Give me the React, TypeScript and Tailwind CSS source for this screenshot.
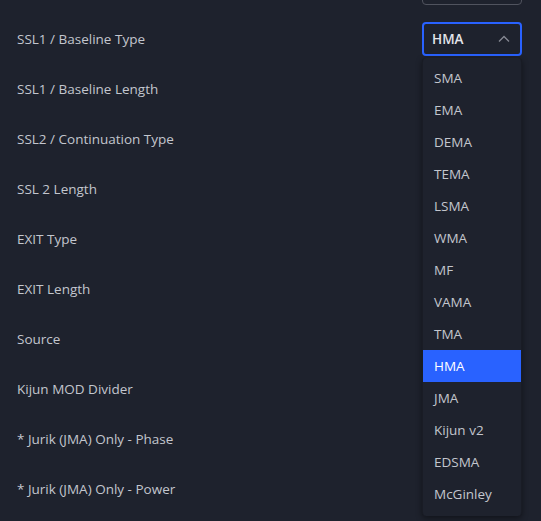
import React from 'react';

const rows = [
  'SSL1 / Baseline Type',
  'SSL1 / Baseline Length',
  'SSL2 / Continuation Type',
  'SSL 2 Length',
  'EXIT Type',
  'EXIT Length',
  'Source',
  'Kijun MOD Divider',
  '* Jurik (JMA) Only - Phase',
  '* Jurik (JMA) Only - Power',
];

const options = [
  'SMA', 'EMA', 'DEMA', 'TEMA', 'LSMA', 'WMA', 'MF', 'VAMA', 'TMA', 'HMA', 'JMA', 'Kijun v2', 'EDSMA', 'McGinley',
];

function ChevronUp() {
  return (
    <svg width="12" height="8" viewBox="0 0 12 8" fill="none">
      <path d="M1 6.5 6 1.5l5 5" stroke="#868993" strokeWidth="1.3" />
    </svg>
  );
}

export default function App() {
  return (
    <div
      className="relative w-[541px] h-[521px] overflow-hidden bg-[#1e222d] text-[13.5px] text-[#c3c6ce]"
      style={{ fontFamily: '"Open Sans", "DejaVu Sans", sans-serif' }}
    >
      <div className="flex justify-end pr-[19px] -mt-[29px] mb-[9px]">
        <div className="w-[100px] h-[34px] rounded-[4px] border border-[#50535e]" />
      </div>
      {rows.map((label, i) => (
        <div key={label} className="h-[50px] flex items-center justify-between pl-[17px] pr-[19px]">
          <span className="mt-[1px]">{label}</span>
          {i === 0 && (
            <div className="relative w-[100px] h-[34px] -mt-[1px]">
              <div className="h-full flex items-center justify-between pl-[8px] pr-[10px] rounded-[4px] border-2 border-[#2962ff] text-[#e3e5ea] font-semibold">
                <span className="mt-[1px]">HMA</span>
                <ChevronUp />
              </div>
            </div>
          )}
        </div>
      ))}
      <div className="absolute left-[422px] top-[58px] w-[100px] pt-[4px] pb-[6px] rounded-[4px] bg-[#1e222d] shadow-[0_2px_6px_rgba(0,0,0,0.45)] border-x border-[#191c25]">
        {options.map((o) => (
          <div
            key={o}
            className={`h-[32px] flex items-center pl-[11px] ${o === 'HMA' ? 'bg-[#2962ff] text-white font-medium' : ''}`}
          >
            {o}
          </div>
        ))}
      </div>
    </div>
  );
}
